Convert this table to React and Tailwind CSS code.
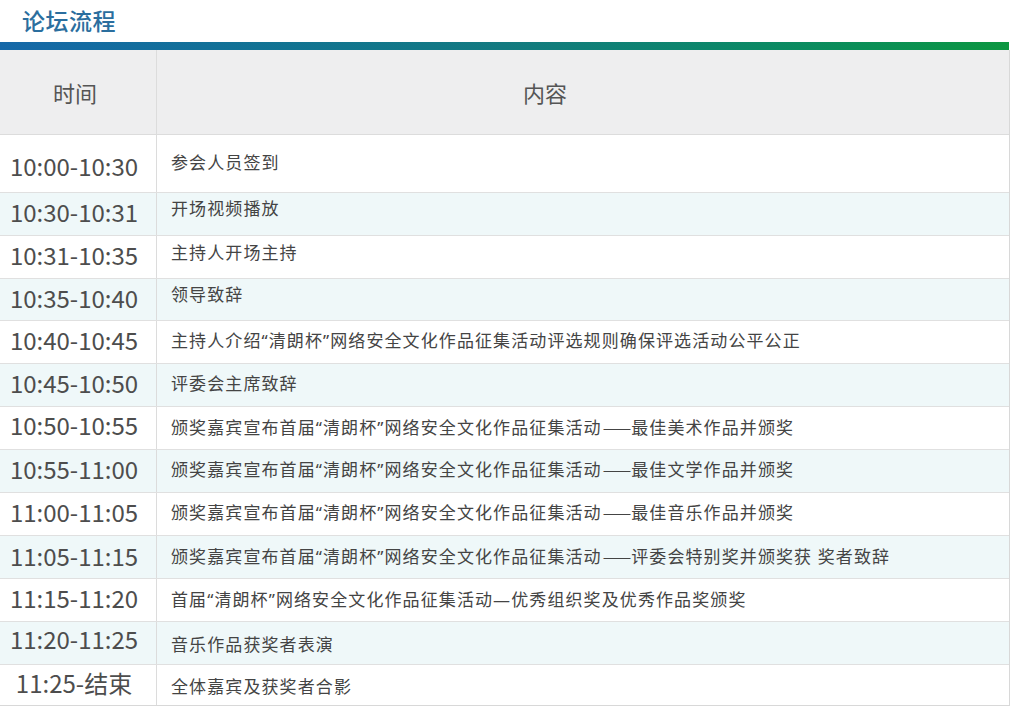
import React from "react";

const rows = [
  ["10:00-10:30", "参会人员签到"],
  ["10:30-10:31", "开场视频播放"],
  ["10:31-10:35", "主持人开场主持"],
  ["10:35-10:40", "领导致辞"],
  ["10:40-10:45", "主持人介绍“清朗杯”网络安全文化作品征集活动评选规则确保评选活动公平公正"],
  ["10:45-10:50", "评委会主席致辞"],
  ["10:50-10:55", "颁奖嘉宾宣布首届“清朗杯”网络安全文化作品征集活动——最佳美术作品并颁奖"],
  ["10:55-11:00", "颁奖嘉宾宣布首届“清朗杯”网络安全文化作品征集活动——最佳文学作品并颁奖"],
  ["11:00-11:05", "颁奖嘉宾宣布首届“清朗杯”网络安全文化作品征集活动——最佳音乐作品并颁奖"],
  ["11:05-11:15", "颁奖嘉宾宣布首届“清朗杯”网络安全文化作品征集活动——评委会特别奖并颁奖获 奖者致辞"],
  ["11:15-11:20", "首届“清朗杯”网络安全文化作品征集活动—优秀组织奖及优秀作品奖颁奖"],
  ["11:20-11:25", "音乐作品获奖者表演"],
  ["11:25-结束", "全体嘉宾及获奖者合影"],
];

const heights = ["h-[58px]", "h-[43px]", "h-[43px]", "h-[42px]", "h-[43px]", "h-[43px]", "h-[43px]", "h-[43px]", "h-[43px]", "h-[43px]", "h-[43px]", "h-[43px]", "h-[40px]"];
const timePad = ["pt-[4px]", "pb-[5px]", "pb-[4px]", "pb-[4px]", "pb-[4px]", "pb-[4px]", "pb-[6px]", "pb-[4px]", "pb-[4px]", "pb-[3px]", "pb-[4px]", "pb-[8px]", "pb-[4px]"];
const contentPad = ["pb-[2px]", "pb-[12px]", "pb-[10px]", "pb-[10px]", "pb-[4px]", "pb-[4px]", "pb-[2px]", "pb-[4px]", "pb-[4px]", "pb-[2px]", "pb-[2px]", "pt-[2px]", "pt-[3px]"];

function Content({ text }) {
  const parts = text.split("——");
  return (
    <>
      {parts.map((p, i) => (
        <React.Fragment key={i}>
          {i > 0 && (
            <span className="tracking-[-1px] mx-[1px] font-['Noto_Sans_CJK_SC',sans-serif]">——</span>
          )}
          {p}
        </React.Fragment>
      ))}
    </>
  );
}

export default function App() {
  return (
    <div className="w-[1024px] h-[710px] bg-white overflow-hidden font-['Noto_Sans_CJK_SC','Noto_Sans',sans-serif]">
      <div className="h-[42px] flex items-center pl-[22px] pb-[2px]">
        <span className="text-[23px] font-medium text-[#2b6e9e] leading-none tracking-[0.5px]">论坛流程</span>
      </div>
      <div className="w-[1009px] h-[8px] bg-gradient-to-r from-[#1668a8] via-[#137a80] to-[#0c9640]" />
      <div className="w-[1010px] border-r border-b border-[#d8d8d8]">
        <div className="flex h-[85px] bg-[#eeeeef] border-b border-[#dcdcdc]">
          <div className="w-[157px] shrink-0 border-r border-[#dcdcdc] flex items-center justify-center pr-[6px] text-[22px] text-[#555]">
            时间
          </div>
          <div className="flex-1 flex items-center justify-center pr-[76px] text-[22px] text-[#555]">
            内容
          </div>
        </div>
        {rows.map(([t, c], i) => (
          <div
            key={i}
            className={`flex ${heights[i]} ${i % 2 === 1 ? "bg-[#eff8f9]" : "bg-white"} ${i < rows.length - 1 ? "border-b border-[#e0e0e0]" : ""}`}
          >
            <div className={`w-[157px] shrink-0 border-r border-[#dcdcdc] flex items-center justify-center pr-[8px] ${timePad[i]} text-[24px] text-[#4d4d4d] leading-none`}>
              {t}
            </div>
            <div
              className={`flex-1 flex items-center pl-[14px] ${contentPad[i]} text-[17px] text-[#444] leading-none tracking-[1.1px] whitespace-pre font-['Noto_Sans','Noto_Sans_CJK_SC',sans-serif]`}
            >
              <span>
                <Content text={c} />
              </span>
            </div>
          </div>
        ))}
      </div>
    </div>
  );
}
